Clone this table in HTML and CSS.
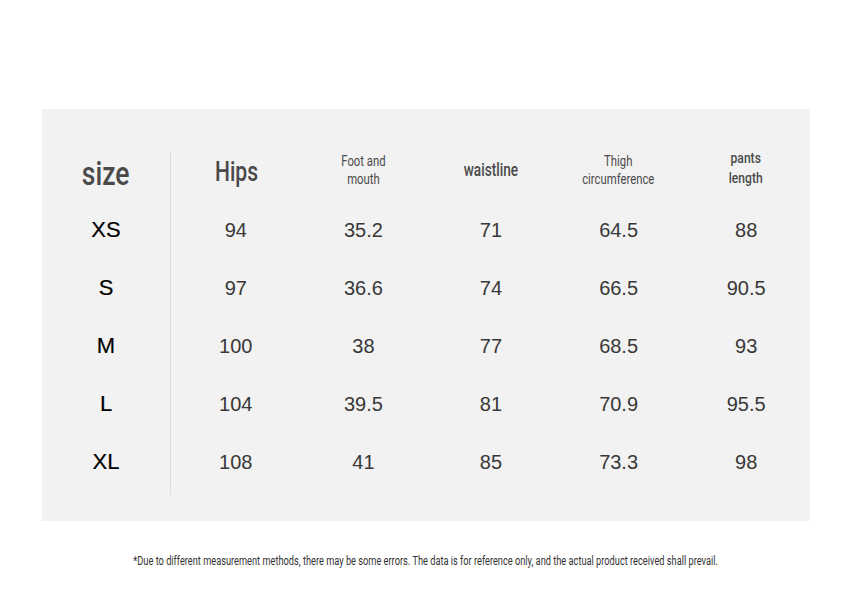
FILE: index.html
```html
<!DOCTYPE html>
<html>
<head>
<meta charset="utf-8">
<link rel="stylesheet" href="styles.css">
</head>
<body>
<div class="page">
  <div class="panel">
    <div class="sizes">
      <div class="cell head"><span class="cond size-title">size</span></div>
      <div class="cell size">XS</div>
      <div class="cell size">S</div>
      <div class="cell size">M</div>
      <div class="cell size">L</div>
      <div class="cell size">XL</div>
    </div>
    <div class="divider"></div>
    <div class="data">
      <div class="cell head"><span class="cond hips">Hips</span></div>
      <div class="cell head"><span class="cond small">Foot and<br>mouth</span></div>
      <div class="cell head"><span class="cond mid">waistline</span></div>
      <div class="cell head"><span class="cond small">Thigh<br>circumference</span></div>
      <div class="cell head"><span class="cond mid2">pants<br>length</span></div>

      <div class="cell">94</div><div class="cell">35.2</div><div class="cell">71</div><div class="cell">64.5</div><div class="cell">88</div>
      <div class="cell">97</div><div class="cell">36.6</div><div class="cell">74</div><div class="cell">66.5</div><div class="cell">90.5</div>
      <div class="cell">100</div><div class="cell">38</div><div class="cell">77</div><div class="cell">68.5</div><div class="cell">93</div>
      <div class="cell">104</div><div class="cell">39.5</div><div class="cell">81</div><div class="cell">70.9</div><div class="cell">95.5</div>
      <div class="cell">108</div><div class="cell">41</div><div class="cell">85</div><div class="cell">73.3</div><div class="cell">98</div>
    </div>
  </div>
  <p class="note"><span class="cond">*Due to different measurement methods, there may be some errors. The data is for reference only, and the actual product received shall prevail.</span></p>
</div>
</body>
</html>
```

FILE: styles.css
```css
html, body {
  margin: 0;
  padding: 0;
  background: #ffffff;
}
.page {
  width: 852px;
  height: 597px;
  padding-top: 109px;
  box-sizing: border-box;
  font-family: "Liberation Sans", Arial, sans-serif;
}
.panel {
  margin-left: 42px;
  width: 768px;
  height: 412px;
  box-sizing: border-box;
  padding: 34px 0 30px;
  background: #f2f2f2;
  display: flex;
}
.sizes {
  width: 128px;
  flex-shrink: 0;
  display: grid;
  grid-template-rows: repeat(6, 58px);
}
.divider {
  width: 1px;
  flex-shrink: 0;
  margin: 9px 0 -4px 0;
  background: #dcdcdc;
}
.data {
  flex: 1;
  display: grid;
  grid-template-columns: repeat(5, 1fr);
  grid-template-rows: repeat(6, 58px);
  padding-left: 1px;
}
.cell {
  display: flex;
  align-items: center;
  justify-content: center;
  text-align: center;
  font-size: 20px;
  color: #383838;
}
.cell.size {
  font-size: 22px;
  color: #000;
  -webkit-text-stroke: 0.2px #000;
}
.cond {
  display: inline-block;
  font-family: Roboto, "Liberation Sans", sans-serif;
  transform: scaleX(0.78);
  color: #4a4a4a;
  white-space: nowrap;
}
.size-title {
  font-size: 34px;
  font-weight: 500;
  margin-top: 2px;
}
.hips {
  font-size: 27px;
  font-weight: 500;
  margin-left: 2px;
}
.small {
  font-size: 14.5px;
  line-height: 18px;
}
.mid {
  font-size: 17.5px;
  font-weight: 500;
  margin-top: -4px;
}
.mid2 {
  font-size: 15.5px;
  font-weight: 500;
  line-height: 20px;
  margin-top: -9px;
}
.head .small {
  margin-top: -3px;
}
.note {
  margin: 30px 0 0;
  text-align: center;
  font-size: 12px;
  line-height: 20px;
}
.note .cond {
  color: #333;
  transform: scaleX(0.77);
}
```
